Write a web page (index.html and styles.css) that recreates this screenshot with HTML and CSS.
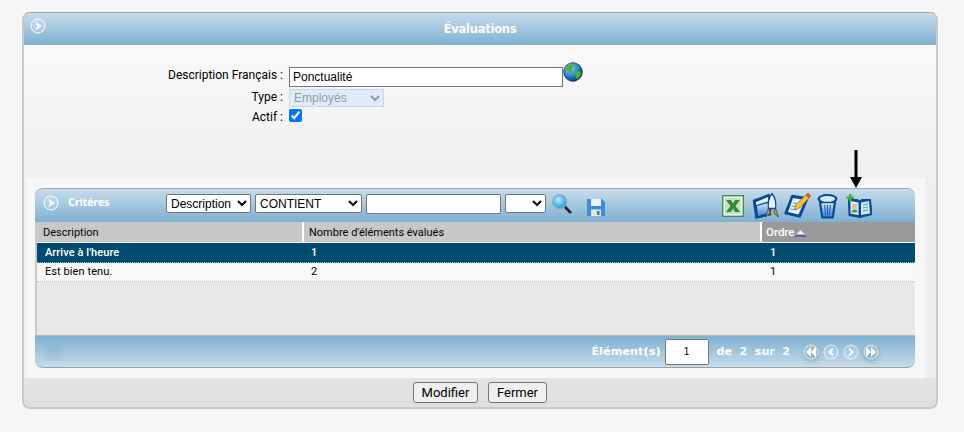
FILE: index.html
```html
<!DOCTYPE html>
<html lang="fr">
<head>
<meta charset="utf-8">
<title>Évaluations</title>
<link rel="stylesheet" href="styles.css">
</head>
<body>
<svg class="defs" width="0" height="0" aria-hidden="true">
  <defs>
    <radialGradient id="sea" cx="35%" cy="30%" r="75%"><stop offset="0" stop-color="#8fd8f5"/><stop offset=".6" stop-color="#1b7fc8"/><stop offset="1" stop-color="#0b3a78"/></radialGradient>
    <radialGradient id="lens" cx="40%" cy="35%" r="70%"><stop offset="0" stop-color="#b5ecff"/><stop offset="1" stop-color="#1a93d8"/></radialGradient>
    <linearGradient id="blueic" x1="0" y1="0" x2="0" y2="1"><stop offset="0" stop-color="#cfe6fb"/><stop offset="1" stop-color="#3f86d0"/></linearGradient>
  </defs>
</svg>
<main class="panel">
  <header class="panel-head">
    <svg class="round-icon" viewBox="0 0 16 16"><circle cx="8" cy="8" r="7" fill="#ffffff22" stroke="#fff" stroke-width="1"/><path d="M5 3.500 12 8 5 12.500 7 8z" fill="#fff"/></svg>
    <h1>Évaluations</h1>
  </header>
  <section class="form">
    <div class="form-row row-desc">
      <label class="lbl">Description Français :</label>
      <input class="desc-input" type="text" value="Ponctualité">
      <svg class="globe" viewBox="0 0 20 20"><circle cx="10" cy="10" r="9.300" fill="url(#sea)" stroke="#0b2f55" stroke-width=".8"/><path d="M3 6c2-3 6-4 8-3 1 1-1 2-2 3s1 2 0 4-2 1-3 0-2-2-3-4zM12 10c2-1 5-1 6 0 0 3-2 6-4 7-1-2-3-5-2-7zM14 3l3 3-2 1z" fill="#4fae2a"/></svg>
    </div>
    <div class="form-row row-type">
      <label class="lbl">Type :</label>
      <select class="type-select" disabled><option>Employés</option></select>
    </div>
    <div class="form-row row-actif">
      <label class="lbl">Actif :</label>
      <input class="check" type="checkbox" checked>
    </div>
  </section>
  <section class="inner">
    <div class="grid">
      <div class="grid-toolbar">
        <svg class="round-icon small" viewBox="0 0 16 16"><circle cx="8" cy="8" r="7" fill="#ffffff22" stroke="#fff" stroke-width="1"/><path d="M5 3.500 12 8 5 12.500 7 8z" fill="#fff"/></svg>
        <span class="grid-title">Critères</span>
        <select class="tb-sel s1"><option>Description</option></select>
        <select class="tb-sel s2"><option>CONTIENT</option></select>
        <input class="tb-input" type="text">
        <select class="tb-sel s3"><option></option></select>
        <svg class="ic search" viewBox="0 0 24 24"><path d="M14 14l7 7" stroke="#223" stroke-width="3" stroke-linecap="round"/><circle cx="9.500" cy="9.500" r="7.500" fill="url(#lens)" stroke="#7fa9c4" stroke-width="1.400"/></svg>
        <svg class="ic save" viewBox="0 0 20 20"><path d="M1 2h15l3 3v14H1z" fill="#3f8be0"/><rect x="5" y="2" width="10" height="7" fill="#eef5fb"/><rect x="5" y="12.500" width="10" height="6.500" fill="#dfe9f2"/><rect x="11" y="14" width="2.500" height="4" fill="#5a6f86"/></svg>
        <span class="tb-spacer"></span>
        <svg class="ic excel" viewBox="0 0 22 22"><rect x=".7" y=".7" width="20.600" height="20.600" fill="#f2f7ef" stroke="#4a8a45" stroke-width="1.400"/><rect x="3" y="3" width="16" height="16" fill="#c7dfc3"/><path d="M4 5h5l2 3.500L13 5h5l-4.500 6 4.500 6h-5l-2-3.500L9 17H4l4.500-6z" fill="#2f8c36"/></svg>
        <svg class="ic rocket" viewBox="0 0 28 28"><path d="M1.500 8.500 17 2.500l2 20-15 3.500z" fill="#0a4a90" stroke="#0a4a90" stroke-width="1.500" stroke-linejoin="round"/><path d="M4 10l12-5v4.500L4 13z" fill="#dff0ff"/><path d="M5 14l11-3v10l-10 3z" fill="url(#blueic)"/><path d="M20 1.500c3 4 4.500 9 3.500 15h-7c-1-6 .5-11 3.500-15z" fill="#eef3f7" stroke="#0a4a90" stroke-width="1.300"/><path d="M16.500 16l-3 9 5-4zM23.500 16l3 9-5-4z" fill="#e08a1e" stroke="#0a4a90" stroke-width=".7"/><path d="M19 19h2l-1 7z" fill="#f2b13a"/></svg>
        <svg class="ic note" viewBox="0 0 28 28"><path d="M8 3.500 24 6l-8 19-15-3.500z" fill="#0a4a90" stroke="#0a4a90" stroke-width="1.500" stroke-linejoin="round"/><path d="M9 6l12 2-6.500 14.500L4 20z" fill="#e6f2fc"/><path d="M9 11l7.500 1M7.500 14l7.500 1M6 17l7 1" stroke="#5f9bd2" stroke-width="1.200"/><path d="M24 1l3 3-11.500 12-5 1.500 1.500-5z" fill="#f4c430" stroke="#a85e1a" stroke-width=".7"/><path d="M24 1l3 3-2.500 2.500-3-3z" fill="#e0603a"/></svg>
        <svg class="ic trash" viewBox="0 0 22 28"><path d="M1.500 6l3 20.500h13l3-20.500z" fill="#0a4a90"/><ellipse cx="11" cy="6" rx="10.500" ry="5" fill="#0a4a90"/><ellipse cx="11" cy="6" rx="8" ry="3" fill="#d5ecfb"/><path d="M4.500 10.500l2 14h9l2-14z" fill="url(#blueic)"/><path d="M8 12.500l1 10.500M11 12.500V23M14 12.500 13 23" stroke="#1d66a8" stroke-width="1.200"/></svg>
        <svg class="ic book" viewBox="0 0 26 24"><path d="M2.500 5.500h9l2 1.500 2-1.500 9 0 1.500 15-12 3-11-2z" fill="#0a4a90" stroke="#0a4a90" stroke-linejoin="round"/><path d="M4.500 7l8 1.500v12.500l-8-1.500z" fill="#eef6fc"/><path d="M15 8.500l8-1.500 1 12.500-9 1.500z" fill="#cfe5f6"/><path d="M17 11l5-1M17 14l5-1M17 17l5-1" stroke="#5f9bd2"/><rect x="5.500" y="9.500" width="6" height="9" fill="#bcd9ee"/><circle cx="8.500" cy="12" r="2" fill="#e8b98a"/><path d="M5.500 18.500c0-4 6-4 6 0z" fill="#3da03a"/><path d="M3 0h2.500v2.500H8V5H5.500v2.500H3V5H.5V2.500H3z" fill="#3cb43c"/></svg>
      </div>
      <div class="grid-table">
        <div class="tr thead">
          <div class="td c1">Description</div>
          <div class="td c2">Nombre d'éléments évalués</div>
          <div class="td c3 sorted">Ordre<svg class="sort" viewBox="0 0 13 7"><path d="M6.500 0 13 7H0z" fill="#6f5aa0"/><path d="M6.500 0 11 4.500H2z" fill="#f4f0f8"/></svg></div>
        </div>
        <div class="tr selected">
          <div class="td c1">Arrive à l'heure</div>
          <div class="td c2">1</div>
          <div class="td c3">1</div>
        </div>
        <div class="tr plain">
          <div class="td c1">Est bien tenu.</div>
          <div class="td c2">2</div>
          <div class="td c3">1</div>
        </div>
        <div class="empty"></div>
      </div>
      <div class="pager">
        <span class="pg-ghost"></span>
        <span class="pg-text">Élément(s)</span>
        <input class="pg-input" type="text" value="1">
        <span class="pg-text pg-of">de&nbsp; 2&nbsp; sur&nbsp; 2</span>
        <div class="pg-buttons">
          <svg class="pg-btn shadowed" viewBox="0 0 16 16"><circle cx="8" cy="8" r="7" fill="#ffffff33" stroke="#fff" stroke-opacity=".7"/><path d="M8 3 3 8l5 5zM13 3 8 8l5 5z" fill="#fff"/></svg>
          <svg class="pg-btn" viewBox="0 0 16 16"><circle cx="8" cy="8" r="7" fill="#ffffff22" stroke="#fff" stroke-opacity=".7"/><path d="M10 3.500 5 8l5 4.500V10L8 8l2-2z" fill="#fff"/></svg>
          <svg class="pg-btn" viewBox="0 0 16 16"><circle cx="8" cy="8" r="7" fill="#ffffff22" stroke="#fff" stroke-opacity=".7"/><path d="M6 3.500 11 8l-5 4.500V10l2-2-2-2z" fill="#fff"/></svg>
          <svg class="pg-btn shadowed" viewBox="0 0 16 16"><circle cx="8" cy="8" r="7" fill="#ffffff33" stroke="#fff" stroke-opacity=".7"/><path d="M3 3l5 5-5 5zM8 3l5 5-5 5z" fill="#fff"/></svg>
        </div>
      </div>
    </div>
  </section>
  <footer class="actions">
    <button class="btn btn-mod" type="button">Modifier</button>
    <button class="btn btn-fer" type="button">Fermer</button>
  </footer>
  <svg class="arrow" viewBox="0 0 12 38"><path d="M4.500 0h3v27H12l-6 11-6-11h4.500z" fill="#000"/></svg>
</main>
</body>
</html>
```

FILE: styles.css
```css
* { box-sizing: border-box; }
html, body { margin: 0; height: 432px; overflow: hidden; }
body { background: #f6f6f6; padding: 12px 26px 0 22px; font-family: Roboto, "Noto Sans", "Liberation Sans", sans-serif; font-size: 12px; color: #000; }
.defs { position: absolute; }
.panel { position: relative; width: 916px; height: 397px; border: 1px solid #a8a8a8; border-top-color: #a0a0a0; border-left: 2px solid #c8c8c8; border-right: 2px solid #c8c8c8; border-bottom: 2px solid #c8c8c8; border-radius: 8px; display: flex; flex-direction: column; overflow: hidden; background: #eee; }
.panel-head { height: 32px; flex: none; background: linear-gradient(#c6dceb, #7fb0d2); position: relative; display: flex; align-items: center; justify-content: center; }
.panel-head h1 { margin: 0 0 1px; font: bold 11.5px "DejaVu Sans", sans-serif; letter-spacing: -.25px; color: #fff; }
.round-icon { position: absolute; left: 6px; top: 5px; width: 16px; height: 16px; }
.form { height: 133px; flex: none; background: linear-gradient(#f9f9f9, #efefef); padding-top: 22px; }
.form-row { display: flex; align-items: flex-start; }
.lbl { width: 265px; text-align: right; padding-right: 6px; line-height: 17px; flex: none; }
.row-desc { height: 22px; }
.desc-input { width: 274px; height: 20px; margin: 0; padding: 1px 3px; border: 1px solid #767676; font: 12px "Liberation Sans", sans-serif; border-radius: 0; background: #fff; }
.globe { width: 20px; height: 20px; margin: -5px 0 0 0; }
.row-type { height: 20px; }
.type-select { width: 95px; height: 18px; margin: 0; font: 12px "Liberation Sans", sans-serif; border-radius: 0; background: #e0ebfa; border: 1px solid #c8d6e8; color: #8f99a6; opacity: 1; }
.row-actif { height: 18px; }
.check { margin: 0; width: 13px; height: 13px; }
.inner { height: 200px; flex: none; width: 899px; margin-left: 2px; background: #f7f7f7; padding: 10px 10px 0 9px; }
.grid { width: 880px; height: 180px; display: flex; flex-direction: column; }
.grid-toolbar { height: 34px; flex: none; border-top: 1px solid #a8a8a8; border-radius: 8px 8px 0 0; background: linear-gradient(#c6dceb, #7fb0d2); position: relative; display: flex; align-items: flex-start; padding: 5px 0 0 131px; }
.round-icon.small { left: 8px; top: 6px; }
.grid-title { position: absolute; left: 33px; top: 5px; color: #fff; font: bold 11px "Noto Sans", sans-serif; letter-spacing: -.25px; }
.tb-sel, .tb-input { font: 12px "Liberation Sans", sans-serif; height: 19px; margin: 0; padding: 0; background: #fff; border-radius: 2px; border: 1px solid #767676; }
.s1 { width: 85px; margin-right: 4px; }
.s2 { width: 107px; margin-right: 4px; }
.tb-input { width: 135px; height: 20px; margin-right: 4px; }
.s3 { width: 41px; margin-right: 5px; }
.ic { flex: none; }
.search { width: 22px; height: 24px; margin: -2px 13px 0 0; }
.save { width: 20px; height: 20px; margin-top: 3px; }
.tb-spacer { flex: 1; }
.excel { width: 22px; height: 22px; margin: 1px 8px 0 0; }
.rocket { width: 28px; height: 28px; margin: -2px 4px 0 0; }
.note { width: 28px; height: 28px; margin: -2px 5px 0 0; }
.trash { width: 21px; height: 27px; margin: -1px 8px 0 0; }
.book { width: 26px; height: 24px; margin: 0 43px 0 0; }
.grid-table { flex: 1; background: #e8e8e8; border-left: 2px solid #c8c8c8; display: flex; flex-direction: column; }
.tr { display: flex; flex: none; }
.td { padding-left: 8px; white-space: nowrap; letter-spacing: .08px; }
.c1 { width: 267px; }
.c2 { width: 458px; padding-left: 7px; }
.c3 { flex: 1; }
.thead { height: 21px; margin-top: 0; line-height: 21px; font-size: 11px; background: #fff; border-bottom: 1px solid #fff; }
.thead .td { background: #c8c8c8; border-right: 2px solid #fff; padding-left: 6px; letter-spacing: 0; }
.thead .c2 { padding-left: 5px; }
.thead .c3 { border-right: 0; padding-left: 4px; background: #9a9a9a; color: #fff; display: flex; align-items: center; font-weight: 500; font-size: 11.5px; }
.sort { width: 13px; height: 7px; margin-top: 3px; }
.selected { height: 20px; line-height: 20px; background: #004a6e; color: #fff; font-weight: 500; font-size: 11px; border-bottom: 1px dotted #9fb8c6; }
.plain { height: 19px; line-height: 18px; background: #f8f8f8; font-size: 11px; border-bottom: 1px dotted #bbb; }
.empty { flex: 1; }
.pager { height: 33px; flex: none; border-top: 1px solid #b4b4b4; border-bottom: 1px solid #a0a0a0; border-radius: 0 0 8px 8px; background: linear-gradient(#7fb0d2, #c6dceb); display: flex; align-items: center; justify-content: flex-end; padding-right: 36px; position: relative; }
.pg-ghost { position: absolute; left: 9px; top: 9px; width: 18px; height: 15px; background: #6f9fc2; opacity: .18; filter: blur(2px); }
.pg-text { color: #fff; font: bold 11.3px "DejaVu Sans", sans-serif; }
.pg-input { width: 44px; height: 26px; margin: 0 8px 0 4px; border: 1px solid #767676; border-radius: 2px; text-align: center; font: 10px "Liberation Sans", sans-serif; padding: 0; background: #fff; }
.pg-of { font-size: 11px; }
.pg-buttons { display: flex; gap: 4px; margin-left: 13px; }
.pg-btn { width: 16px; height: 16px; }
.shadowed { filter: drop-shadow(0 2px 2px #5f7f97); }
.actions { flex: 1; background: linear-gradient(#e4e4e4, #dedede); display: flex; justify-content: center; gap: 10px; padding: 4px 0 0 0; }
.btn { height: 21px; padding: 0 7px; font: 13px Roboto, "Liberation Sans", sans-serif; line-height: 17px; background: #efefef; border: 1px solid #767676; border-radius: 3px; }
.btn-mod { width: 65px; }
.btn-fer { width: 59px; }
.arrow { position: absolute; left: 826px; top: 137px; width: 12px; height: 38px; }
```
